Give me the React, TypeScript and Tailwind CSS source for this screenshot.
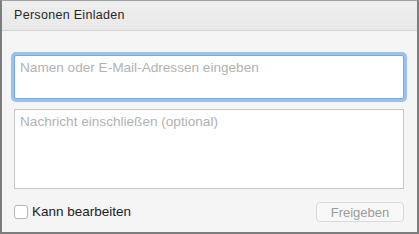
import React from "react";

export default function App() {
  return (
    <div
      className="w-[419px] h-[234px] flex flex-col bg-[#f5f5f5] border-l-2 border-r-2 border-b-2 border-t border-l-[#7d7d7d] border-r-[#7d7d7d] border-b-[#7d7d7d] border-t-[#a0a0a0] box-border overflow-hidden"
      style={{ fontFamily: '"Liberation Sans", Arial, sans-serif' }}
    >
      <div className="h-[30px] shrink-0 flex items-center pl-[12px] bg-gradient-to-b from-[#eeeeee] to-[#e9e9e9] border-b border-[#d3d3d3]">
        <span className="text-[12.5px] tracking-[0.3px] leading-none text-[#262626]">Personen Einladen</span>
      </div>
      <div className="flex flex-col pl-[12px] pr-[13px] pt-[24px]">
        <div className="h-[44px] bg-white border border-[#79a8e4] rounded-[2px] shadow-[0_0_0_3px_#98c2f1] px-[5px] pt-[5px] text-[13.6px] leading-none text-[#b2b2b2]">
          Namen oder E-Mail-Adressen eingeben
        </div>
        <div className="mt-[10px] h-[80px] bg-white border border-[#c7c7c7] px-[5px] pt-[5px] text-[13.6px] leading-none text-[#b2b2b2]">
          Nachricht einschließen (optional)
        </div>
        <div className="mt-[13px] flex items-center justify-between">
          <div className="flex items-center">
            <div className="w-[14px] h-[14px] rounded-[3px] border border-[#b3b3b3] bg-white" />
            <span className="ml-[4px] text-[13.5px] leading-none text-[#1c1c1c]">Kann bearbeiten</span>
          </div>
          <div className="w-[88px] h-[20px] rounded-[4px] border border-[#dadada] bg-[#f8f8f8] flex items-center justify-center">
            <span className="text-[13px] leading-none text-[#9b9b9b]">Freigeben</span>
          </div>
        </div>
      </div>
    </div>
  );
}
